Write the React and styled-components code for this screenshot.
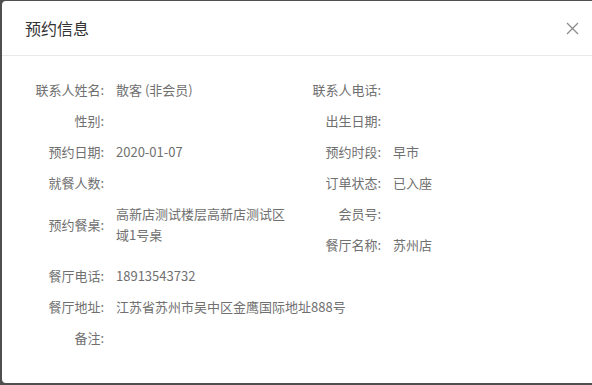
import React from 'react';
import styled, { createGlobalStyle } from 'styled-components';

const GlobalStyle = createGlobalStyle`
  html, body {
    margin: 0;
    padding: 0;
    overflow: hidden;
    background: #4f4f4f;
  }
  body {
    font-family: "Noto Sans CJK SC", "Noto Sans", sans-serif;
  }
`;

const Backdrop = styled.div`
  width: 592px;
  height: 385px;
  padding: 1px 0 0 2px;
  box-sizing: border-box;
  background: #4f4f4f;
  overflow: hidden;
`;

const Modal = styled.div`
  width: 600px;
  height: 382px;
  background: #fff;
  border-radius: 4px;
  display: flex;
  flex-direction: column;
`;

const Header = styled.div`
  height: 54px;
  display: flex;
  align-items: center;
  justify-content: space-between;
  padding: 0 23px 0 23px;
  border-bottom: 1px solid #e8e8e8;
`;

const Title = styled.h3`
  margin: 0;
  font-size: 16px;
  font-weight: 400;
  color: #333;
`;

const CloseButton = styled.button`
  border: none;
  background: none;
  padding: 0;
  width: 14px;
  height: 14px;
  display: flex;
  align-items: center;
  justify-content: center;
  cursor: pointer;
`;

const Body = styled.div`
  padding: 18px 12px 28px 12px;
  display: grid;
  grid-template-columns: 277px 277px;
  align-items: start;
`;

const Item = styled.div`
  display: flex;
  align-items: center;
  padding: 5px 0;
  font-size: 13px;
  line-height: 21px;
  color: #707070;
  align-self: start;
  grid-row: ${(p) => (p.$tall ? 'span 2' : 'auto')};
  grid-column: ${(p) => (p.$wide ? 'span 2' : 'auto')};
`;

const Label = styled.span`
  width: 90px;
  flex-shrink: 0;
  text-align: right;
  margin-right: 12px;
  color: #707070;
`;

const Value = styled.span`
  flex: 1;
  color: #707070;
  word-break: break-all;
`;

const rows = [
  { label: '联系人姓名:', value: '散客 (非会员)' },
  { label: '联系人电话:', value: '' },
  { label: '性别:', value: '' },
  { label: '出生日期:', value: '' },
  { label: '预约日期:', value: '2020-01-07' },
  { label: '预约时段:', value: '早市' },
  { label: '就餐人数:', value: '' },
  { label: '订单状态:', value: '已入座' },
  { label: '预约餐桌:', value: '高新店测试楼层高新店测试区域1号桌', tall: true },
  { label: '会员号:', value: '' },
  { label: '餐厅名称:', value: '苏州店' },
  { label: '餐厅电话:', value: '18913543732' },
  { label: '餐厅地址:', value: '江苏省苏州市吴中区金鹰国际地址888号', wide: true },
  { label: '备注:', value: '', wide: true },
];

const App = () => {
  return (
    <>
      <GlobalStyle />
      <Backdrop>
        <Modal>
          <Header>
            <Title>预约信息</Title>
            <CloseButton aria-label="close">
              <svg width="13" height="13" viewBox="0 0 13 13">
                <path d="M1 1 L12 12 M12 1 L1 12" stroke="#8c8c8c" strokeWidth="1.3" fill="none" />
              </svg>
            </CloseButton>
          </Header>
          <Body>
            {rows.map((r) => (
              <Item key={r.label} $tall={r.tall} $wide={r.wide}>
                <Label>{r.label}</Label>
                <Value>{r.value}</Value>
              </Item>
            ))}
          </Body>
        </Modal>
      </Backdrop>
    </>
  );
};

export default App;
